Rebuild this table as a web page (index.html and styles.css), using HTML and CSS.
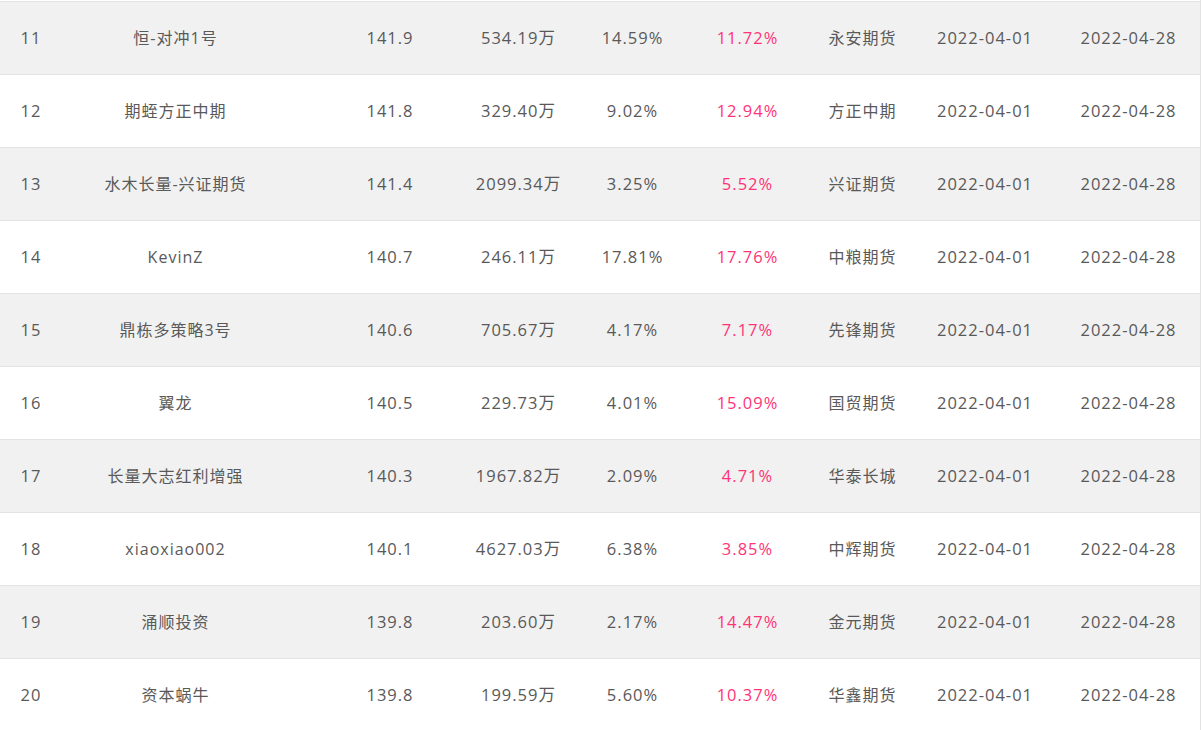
FILE: index.html
```html
<!DOCTYPE html>
<html lang="zh-CN">
<head>
<meta charset="utf-8">
<title>排行榜</title>
<link rel="stylesheet" href="styles.css">
</head>
<body>
<div class="rank-table">
  <div class="row odd">
    <div class="cell num">11</div><div class="cell">恒-对冲1号</div><div class="cell num c-score">141.9</div><div class="cell num">534.19万</div><div class="cell num">14.59%</div><div class="cell num up">11.72%</div><div class="cell">永安期货</div><div class="cell num">2022-04-01</div><div class="cell num c-end">2022-04-28</div>
  </div>
  <div class="row">
    <div class="cell num">12</div><div class="cell">期蛭方正中期</div><div class="cell num c-score">141.8</div><div class="cell num">329.40万</div><div class="cell num">9.02%</div><div class="cell num up">12.94%</div><div class="cell">方正中期</div><div class="cell num">2022-04-01</div><div class="cell num c-end">2022-04-28</div>
  </div>
  <div class="row odd">
    <div class="cell num">13</div><div class="cell">水木长量-兴证期货</div><div class="cell num c-score">141.4</div><div class="cell num">2099.34万</div><div class="cell num">3.25%</div><div class="cell num up">5.52%</div><div class="cell">兴证期货</div><div class="cell num">2022-04-01</div><div class="cell num c-end">2022-04-28</div>
  </div>
  <div class="row">
    <div class="cell num">14</div><div class="cell">KevinZ</div><div class="cell num c-score">140.7</div><div class="cell num">246.11万</div><div class="cell num">17.81%</div><div class="cell num up">17.76%</div><div class="cell">中粮期货</div><div class="cell num">2022-04-01</div><div class="cell num c-end">2022-04-28</div>
  </div>
  <div class="row odd">
    <div class="cell num">15</div><div class="cell">鼎栋多策略3号</div><div class="cell num c-score">140.6</div><div class="cell num">705.67万</div><div class="cell num">4.17%</div><div class="cell num up">7.17%</div><div class="cell">先锋期货</div><div class="cell num">2022-04-01</div><div class="cell num c-end">2022-04-28</div>
  </div>
  <div class="row">
    <div class="cell num">16</div><div class="cell">翼龙</div><div class="cell num c-score">140.5</div><div class="cell num">229.73万</div><div class="cell num">4.01%</div><div class="cell num up">15.09%</div><div class="cell">国贸期货</div><div class="cell num">2022-04-01</div><div class="cell num c-end">2022-04-28</div>
  </div>
  <div class="row odd">
    <div class="cell num">17</div><div class="cell">长量大志红利增强</div><div class="cell num c-score">140.3</div><div class="cell num">1967.82万</div><div class="cell num">2.09%</div><div class="cell num up">4.71%</div><div class="cell">华泰长城</div><div class="cell num">2022-04-01</div><div class="cell num c-end">2022-04-28</div>
  </div>
  <div class="row">
    <div class="cell num">18</div><div class="cell">xiaoxiao002</div><div class="cell num c-score">140.1</div><div class="cell num">4627.03万</div><div class="cell num">6.38%</div><div class="cell num up">3.85%</div><div class="cell">中辉期货</div><div class="cell num">2022-04-01</div><div class="cell num c-end">2022-04-28</div>
  </div>
  <div class="row odd">
    <div class="cell num">19</div><div class="cell">涌顺投资</div><div class="cell num c-score">139.8</div><div class="cell num">203.60万</div><div class="cell num">2.17%</div><div class="cell num up">14.47%</div><div class="cell">金元期货</div><div class="cell num">2022-04-01</div><div class="cell num c-end">2022-04-28</div>
  </div>
  <div class="row">
    <div class="cell num">20</div><div class="cell">资本蜗牛</div><div class="cell num c-score">139.8</div><div class="cell num">199.59万</div><div class="cell num">5.60%</div><div class="cell num up">10.37%</div><div class="cell">华鑫期货</div><div class="cell num">2022-04-01</div><div class="cell num c-end">2022-04-28</div>
  </div>
</div>
</body>
</html>
```

FILE: styles.css
```css
html, body {
  margin: 0;
  padding: 0;
  background: #ffffff;
}

body {
  font-family: "Open Sans", "Noto Sans CJK SC", sans-serif;
  font-size: 16px;
  color: #595959;
}

.rank-table {
  width: 1200px;
  padding-top: 1px;
  border-right: 1px solid #e3e3e3;
}

.row {
  display: grid;
  grid-template-columns: 62px 227px 161px 137px 91px 139px 91px 154px 138px;
  height: 72px;
  border-top: 1px solid #e3e3e3;
  background: #ffffff;
}

.row.odd {
  background: #f1f1f1;
}

.cell {
  display: flex;
  align-items: center;
  justify-content: center;
  white-space: nowrap;
  letter-spacing: 1px;
  line-height: 20px;
}

.num {
  font-size: 16.5px;
}

.c-score {
  padding-left: 41px;
}

.c-end {
  padding-right: 5px;
}

.up {
  color: #ff3377;
}
```
